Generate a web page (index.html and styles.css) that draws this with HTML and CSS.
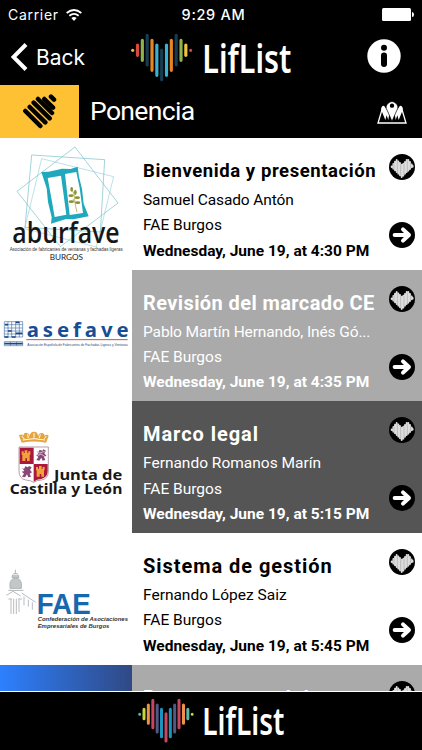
FILE: index.html
```html
<!DOCTYPE html>
<html lang="en">
<head>
    <meta charset="UTF-8">
    <meta name="viewport" content="width=device-width, initial-scale=1.0">
    <title>LifList</title>
    <link rel="stylesheet" href="styles.css">
</head>
<body>
    <!-- shared icons -->
    <svg class="defs">
        <symbol id="heart" viewBox="0 0 78 78">
            <circle cx="39" cy="39" r="39" fill="#000"/>
            <path d="M8 37v2M13 30v14M18 23v26M23 18v36M28 22v37M33 27v37M38 32v37M43 29v36M48 24v35M53 18v36M58 18v32M63 24v21M68 31v9M71 36v2" stroke="#ddd" stroke-width="5.500" stroke-linecap="round"/>
            <path d="M15 30v14M25 21v36M35 29v36M45 29v34M55 20v32M65 28v14" stroke="#999" stroke-width="1.500"/>
        </symbol>
        <symbol id="arrow" viewBox="0 0 78 78">
            <circle cx="39" cy="39" r="39" fill="#000"/>
            <path d="M17 39h42M42 22l18 17-18 17" fill="none" stroke="#fff" stroke-width="12" stroke-linecap="round" stroke-linejoin="round"/>
        </symbol>
    </svg>

    <div class="app">
        <div class="status">
            <div class="carrier">
                <span>Carrier</span>
                <svg width="16" height="12" viewBox="0 0 48 36">
                    <path d="M2 12q22-18 44 0M10 20q14-11 28 0" fill="none" stroke="#fff" stroke-width="5.500"/>
                    <path d="M16 27q8-6 16 0l-8 9z" fill="#fff"/>
                </svg>
            </div>
            <span class="time">9:29 AM</span>
            <svg class="battery" width="32" height="13" viewBox="0 0 32 13">
                <rect width="29" height="13" rx="1.5" fill="#fff"/>
                <path d="M30 4q2 0 2 2.500t-2 2.500z" fill="#fff"/>
            </svg>
        </div>

        <header class="navbar">
            <a class="back">
                <svg width="17" height="28" viewBox="0 0 17 28"><path d="M15 1.500L2.500 14 15 26.500" fill="none" stroke="#fff" stroke-width="4"/></svg>
                <span>Back</span>
            </a>
            <svg class="logo" width="162" height="50" viewBox="390 93 486 150">
                <g stroke-width="9.500" stroke-linecap="round">
                    <path d="M398 148v.1" stroke="#f4bb42"/>
                    <path d="M412.500 132v31M572 148v.1" stroke="#d8483e"/>
                    <path d="M427 118v60M543 118v60" stroke="#8fb24c"/>
                    <path d="M441.500 103v89M485 147v89M528.500 103v89" stroke="#173c50"/>
                    <path d="M456 118v90M514 118v90" stroke="#e88422"/>
                    <path d="M470.500 132v91M499.500 132v91" stroke="#38b1d2"/>
                    <path d="M557.500 132v31" stroke="#f1c440"/>
                </g>
                <text class="wordmark" x="607" y="215" textLength="267" lengthAdjust="spacingAndGlyphs">LifList</text>
            </svg>
            <svg class="info" width="34" height="34" viewBox="0 0 34 34">
                <circle cx="17" cy="17" r="16.700" fill="#fff"/>
                <circle cx="17" cy="8.800" r="3" fill="#000"/>
                <path d="M17 16.500v8.500" stroke="#000" stroke-width="6" stroke-linecap="round"/>
            </svg>
        </header>

        <div class="section">
            <div class="category">
                <svg width="34" height="36" viewBox="69 282 102 108">
                    <path d="M76 333l45 45M89 321l47 46M101 308l48 47M114 297l42 42M133 297l26 26M153 290l9 9" fill="none" stroke="#000" stroke-width="13.500" stroke-linecap="round"/>
                </svg>
            </div>
            <h1>Ponencia</h1>
            <svg class="map" width="30" height="26" viewBox="0 0 90 78">
                <path d="M17 25L3 72h84L73 25" fill="none" stroke="#fff" stroke-width="4"/>
                <path d="M21 20q-10 0-8 14l12 29 4-14 5 14 3-20M69 20q10 0 8 14L65 63l-4-14-5 14-3-20" fill="#fff"/>
                <path d="M45 67L31 35a17 17 0 1 1 28 0z" fill="#fff" stroke="#000" stroke-width="2"/>
                <circle cx="45" cy="20" r="6.500" fill="#000"/>
            </svg>
        </div>

        <main class="list">
            <article class="item">
                <svg class="brand" viewBox="0 6 396 395">
                    <g fill="none" stroke="#73bfc8" stroke-width="2">
                        <path d="M95 57l219 14-13 217-226-14z"/>
                        <path d="M125 68l216 54-52 211-215-55z" opacity=".7"/>
                        <path d="M225 33l129 168-173 131L51 166z"/>
                    </g>
                    <path d="M124 108l22-1 40-9 26 1 21-7 4 31 9 35 5 45 15 38-46 9-22-1-45 14 2-19-11-46-4-41z" fill="#20a9bc"/>
                    <path d="M143 126l40-7 16 117-35 7-9-52zM195 114l34-6 10 48 10 75-40 6z" fill="#fff"/>
                    <path d="M215 155l8 25 3 27 5 22M223 200l-4-12" fill="none" stroke="#9a9638" stroke-width="2"/>
                    <g fill="#8b922f"><ellipse cx="215" cy="160" rx="4" ry="7"/><ellipse cx="226" cy="169" rx="4" ry="8"/><ellipse cx="213" cy="179" rx="8" ry="4"/><ellipse cx="232" cy="185" rx="8" ry="4"/><ellipse cx="214" cy="197" rx="8" ry="4"/><ellipse cx="233" cy="200" rx="8" ry="4"/></g>
                    <text class="aburfave" x="37" y="320" textLength="322" lengthAdjust="spacingAndGlyphs">aburfave</text>
                    <text class="small" x="29" y="344" textLength="339" lengthAdjust="spacingAndGlyphs">Asociación de fabricantes de ventanas y fachadas ligeras</text>
                    <text class="burgos" x="149" y="373" textLength="100" lengthAdjust="spacingAndGlyphs">BURGOS</text>
                </svg>
                <div class="details">
                    <h2 class="long">Bienvenida y presentación</h2>
                    <p class="speaker">Samuel Casado Antón</p>
                    <p>FAE Burgos</p>
                    <p class="date">Wednesday, June 19, at 4:30 PM</p>
                </div>
                <div class="actions">
                    <svg><use href="#heart"/></svg>
                    <svg><use href="#arrow"/></svg>
                </div>
            </article>

            <article class="item light">
                <svg class="brand" viewBox="0 -91 396 395">
                    <path d="M13 64h55v46H13zM13 124h55v12H13zM13 73h55M13 83h55M13 92h55M13 101h55M24 64v46M35 64v46M47 64v46M58 64v46M31 124v12M50 124v12" fill="none" stroke="#4a72ab" stroke-width="2"/>
                    <path d="M15 73h9M47 66h11M24 92h11M47 99h20M13 110h12M35 110h12M13 130h55" stroke="#174683" stroke-width="5"/>
                    <text class="asefave" x="80" y="111" textLength="306">asefave</text>
                    <path d="M79 118h304" stroke="#c44c5c" stroke-width="3"/>
                    <text class="tiny" x="82" y="136" textLength="302" lengthAdjust="spacingAndGlyphs">Asociación Española de Fabricantes de Fachadas Ligeras y Ventanas</text>
                </svg>
                <div class="details">
                    <h2 class="revision">Revisión del marcado CE</h2>
                    <p class="speaker">Pablo Martín Hernando, Inés Gó...</p>
                    <p>FAE Burgos</p>
                    <p class="date">Wednesday, June 19, at 4:35 PM</p>
                </div>
                <div class="actions">
                    <svg><use href="#heart"/></svg>
                    <svg><use href="#arrow"/></svg>
                </div>
            </article>

            <article class="item dark">
                <svg class="brand" viewBox="0 -56 396 395">
                    <path d="M65 69l-8-22q7-6 13 1 2-13 14-7 6 4 5 9 1-14 13-14t12 14q3-12 13-10 7 2 7 8 7-6 12 1l-8 20q-36-7-73 0z" fill="#e6a43c"/>
                    <path d="M68 61q35-8 67 0M65 49l8 9M83 44l2 11M102 40v14M121 44l-3 11M139 49l-6 8" fill="none" stroke="#fff" stroke-width="3"/>
                    <path d="M57 82h88v72q0 23-20 27-16 1-24 7-8-6-24-7-20-4-20-27z" fill="#fff" stroke="#8f7178" stroke-width="2"/>
                    <path d="M59 84h42v49H59zM101 133h42v22q0 18-19 23-14 1-23 8z" fill="#aa193b"/>
                    <path id="castle" d="M67 124v-19h-2V95h6v5h3v-8h8v8h3v-5h6v10h-2v19h-8v-8h-5v8z" fill="#f0a23b"/>
                    <use href="#castle" x="43" y="47"/>
                    <path id="lion" d="M109 94l6 4 4-8 8 3 3-4 8 4-5 8 6 7-7 4 4 9-8 2-4-9-6 9-9-2 6-9-7-6 8-2z" fill="#8a4775"/>
                    <path d="M108 96l11 4 15-5M113 108l10-5 12 8" stroke="#fff" stroke-width="2" fill="none"/>
                    <use href="#lion" x="-43" y="50"/>
                    <text class="junta" x="162" y="182" textLength="205" lengthAdjust="spacingAndGlyphs">Junta de</text>
                    <text class="junta" x="29" y="224" textLength="338" lengthAdjust="spacingAndGlyphs">Castilla y León</text>
                </svg>
                <div class="details">
                    <h2 class="marco">Marco legal</h2>
                    <p>Fernando Romanos Marín</p>
                    <p>FAE Burgos</p>
                    <p class="date">Wednesday, June 19, at 5:15 PM</p>
                </div>
                <div class="actions">
                    <svg><use href="#heart"/></svg>
                    <svg><use href="#arrow"/></svg>
                </div>
            </article>

            <article class="item">
                <svg class="brand" viewBox="0 -81 396 395">
                    <path d="M46 29v12M40 41h13M38 44l-2 9h21l-3-9M30 70q3-15 17-15t17 15v15H30zM25 91h45" fill="#c3c7ca" stroke="#adb3b7" stroke-width="3"/>
                    <path d="M19 106l20-12 23 14M65 99l42 28M72 110v26M85 119v21M97 127v22M33 116v46M41 116v46M49 116v46M57 116v40M25 117h10M55 117h11" fill="none" stroke="#b7bcc0" stroke-width="3"/>
                    <text class="fae" x="110" y="162" textLength="162" lengthAdjust="spacingAndGlyphs">FAE</text>
                    <text class="fae-text" x="113" y="184" textLength="271" lengthAdjust="spacingAndGlyphs">Confederación de Asociaciones</text>
                    <text class="fae-text" x="113" y="204" textLength="215" lengthAdjust="spacingAndGlyphs">Empresariales de Burgos</text>
                </svg>
                <div class="details">
                    <h2 class="sistema">Sistema de gestión</h2>
                    <p>Fernando López Saiz</p>
                    <p>FAE Burgos</p>
                    <p class="date">Wednesday, June 19, at 5:45 PM</p>
                </div>
                <div class="actions">
                    <svg><use href="#heart"/></svg>
                    <svg><use href="#arrow"/></svg>
                </div>
            </article>

            <article class="item light">
                <div class="brand blue"></div>
                <div class="details">
                    <h2 class="next">Propuesta modelat</h2>
                </div>
                <div class="actions">
                    <svg><use href="#heart"/></svg>
                </div>
            </article>
        </main>

        <footer>
            <svg width="148" height="48" viewBox="412 126 444 144">
                <g stroke-width="9" stroke-linecap="round">
                    <path d="M420 178v.1M564.500 163v28" stroke="#5cb8a5"/>
                    <path d="M433 163v28M577.500 178v.1" stroke="#c7d43a"/>
                    <path d="M446 150v55M551.500 150v55" stroke="#ef914c"/>
                    <path d="M459.500 136v82M499 176v82M538 136v82" stroke="#c7475f"/>
                    <path d="M472.500 150v81M525 150v81" stroke="#505984"/>
                    <path d="M485.500 163v82M512 163v82" stroke="#1b94bd"/>
                </g>
                <text class="wordmark bottom" x="608" y="240" textLength="246" lengthAdjust="spacingAndGlyphs">LifList</text>
            </svg>
        </footer>
    </div>
</body>
</html>
```

FILE: styles.css
```css
* {
    box-sizing: border-box;
}
body {
    margin: 0;
    background-color: #000;
    font-family: Roboto, "Noto Sans", sans-serif;
}
h1, h2, p {
    margin: 0;
    white-space: nowrap;
}
.defs {
    position: absolute;
    width: 0;
    height: 0;
}
.app {
    display: flex;
    flex-direction: column;
    width: 422px;
    height: 750px;
    overflow: hidden;
    color: #fff;
}
.status {
    display: grid;
    grid-template-columns: 1fr auto 1fr;
    align-items: center;
    height: 29px;
    padding: 0 8px 0 8px;
    font-family: Inter, sans-serif;
    font-size: 14px;
}
.carrier {
    display: flex;
    align-items: center;
    gap: 7px;
    letter-spacing: 0.7px;
}
.time {
    padding-left: 5px;
    font-weight: 500;
    font-size: 14.5px;
    letter-spacing: 0.7px;
}
.battery {
    justify-self: end;
}
.navbar {
    display: flex;
    align-items: center;
    height: 56px;
    padding: 0 21px 0 11px;
}
.back {
    display: flex;
    align-items: center;
    gap: 8px;
    width: 119px;
    font-family: Inter, sans-serif;
    font-size: 21px;
}
.logo {
    margin-bottom: 1px;
    overflow: visible;
}
.info {
    margin: 0 0 3px auto;
}
.wordmark {
    font-family: "Noto Sans", sans-serif;
    font-weight: 600;
    font-size: 121px;
    fill: #fff;
}
.bottom {
    font-size: 111px;
}
.section {
    display: flex;
    align-items: center;
    height: 53px;
    flex: none;
    padding-right: 15px;
}
.category {
    display: flex;
    align-items: center;
    justify-content: center;
    width: 79px;
    height: 53px;
    background-color: #fdc133;
}
h1 {
    padding: 0 0 3px 11px;
    font-weight: 400;
    font-size: 26.5px;
    letter-spacing: -0.65px;
}
.map {
    margin-left: auto;
}
.list {
    flex: none;
    height: 553px;
    overflow: hidden;
    background-color: #fff;
}
.item {
    display: flex;
    height: 131.67px;
    color: #000;
    background-color: #fff;
}
.light {
    color: #fff;
    background-color: #aaa;
}
.dark {
    color: #fff;
    background-color: #555;
}
.brand {
    flex: none;
    width: 132px;
    height: 100%;
    background-color: #fff;
}
.blue {
    background: linear-gradient(to right, #2d80ff, #304984);
}
.details {
    width: 250px;
    padding: 20px 0 0 11px;
}
h2 {
    font-weight: 700;
    font-size: 20px;
    line-height: 26px;
    margin-bottom: 4px;
}
h2.long {
    font-size: 18.5px;
    letter-spacing: 0.58px;
}
h2.revision {
    letter-spacing: 0.4px;
}
h2.marco, h2.sistema {
    letter-spacing: 0.95px;
}
h2.next {
    letter-spacing: 0.9px;
}
.details p {
    font-size: 15.5px;
    line-height: 25.3px;
}
.details .speaker {
    letter-spacing: -0.12px;
}
.details .date {
    font-weight: 700;
}
.actions {
    display: flex;
    flex-direction: column;
    gap: 42px;
    padding: 16px 0 0 7px;
}
.actions svg {
    width: 26px;
    height: 26px;
}
.aburfave {
    font: 600 84px "Open Sans", sans-serif;
    fill: #171717;
}
.small {
    font: 16px "Liberation Sans", sans-serif;
    fill: #333;
}
.burgos {
    font: 24px Lato, sans-serif;
    fill: #222;
}
.asefave {
    font: 700 61px "Noto Sans", sans-serif;
    fill: #174e93;
}
.tiny {
    font: 12px "Liberation Sans", sans-serif;
    fill: #244b79;
}
.junta {
    font: 700 40px "Noto Sans", sans-serif;
    fill: #181818;
}
.fae {
    font: 700 89px "Liberation Sans", sans-serif;
    fill: #1768ad;
}
.fae-text {
    font: italic 700 18px "Liberation Sans", sans-serif;
    fill: #333;
}
footer {
    display: flex;
    height: 59px;
    flex: none;
    padding: 5px 0 0 137px;
    border-top: 1px solid #fff;
}
```
